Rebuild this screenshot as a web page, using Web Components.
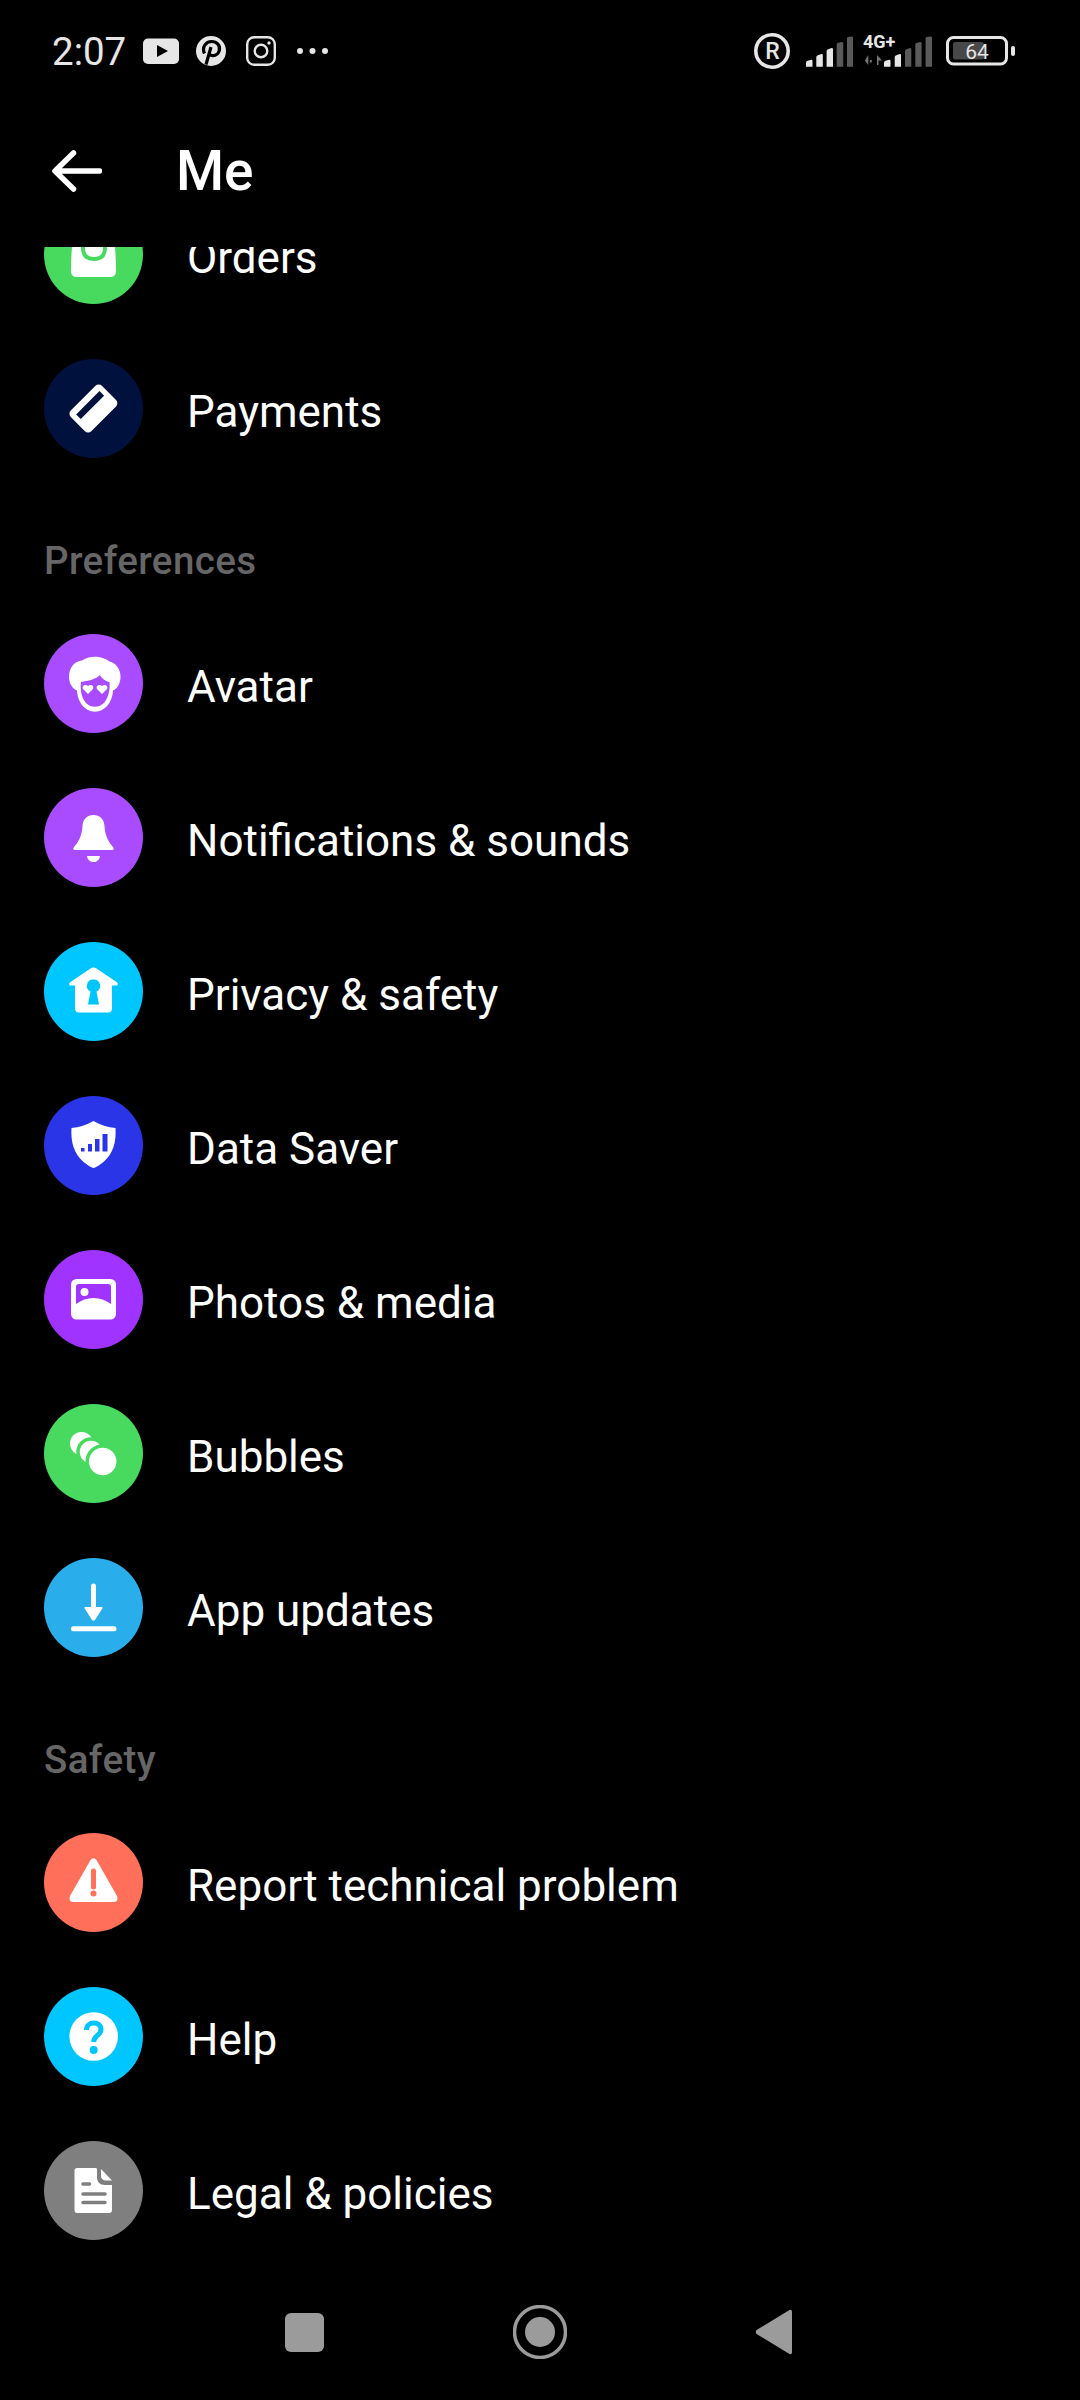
<!DOCTYPE html>
<html><head><meta charset="utf-8"><title>Me</title>
<style>html,body{margin:0;background:#000}</style></head>
<body>
<app-screen>
<status-bar></status-bar>
<app-bar title="Me"></app-bar>
<menu-list>
<menu-row label="Orders" color="#48d95f"><svg slot="icon" viewBox="0 0 99 99"><path d="M30 26H69Q72 45 72 66Q72 72 66 72H33Q27 72 27 66Q27 45 30 26Z" fill="#fff"/><path d="M39 30V43Q39 54 50 54Q61 54 61 43V30" fill="none" stroke="#48d95f" stroke-width="4"/></svg></menu-row>
<menu-row label="Payments" color="#01113d"><svg slot="icon" viewBox="0 0 99 99"><g transform="rotate(-45 49.4 49.5)"><rect x="27.4" y="35" width="44" height="29" rx="4.5" fill="#fff"/><rect x="33" y="41.5" width="33" height="6.5" fill="#01113d"/></g></svg></menu-row>
<section-label>Preferences</section-label>
<menu-row label="Avatar" color="#a94bff"><svg slot="icon" viewBox="0 0 99 99"><path d="M51 22.700C56 22.700 62 24.500 65.500 27.500C72 28.500 77 36 76.500 44C76 50 73 55 69 56.500C68.500 68 61 77.700 51 77.700C41 77.700 33.500 68 33 56.500C29 55 25 50 25 43C25 33 31 27 38 26.500C41 24 46 22.700 51 22.700Z" fill="#fff"/><path d="M37 48C44 47 52 45 56 41C58 45 62 47.500 65.500 48C66.500 60 62 72.700 51 72.700C40 72.700 35.500 60 37 48Z" fill="#a94bff"/><path d="M44 60L39 55C37.500 52 41 49.500 44 52C47 49.500 50.500 52 49 55Z" fill="#fff"/><path d="M58 60L53 55C51.500 52 55 49.500 58 52C61 49.500 64.500 52 63 55Z" fill="#fff"/></svg></menu-row>
<menu-row label="Notifications &amp; sounds" color="#a94bff"><svg slot="icon" viewBox="0 0 99 99"><path d="M49.500 27C56 27 60 31 60.500 38C61 46 63 52 69 59Q71 61.500 68 62H31Q28 61.500 30 59C36 52 38 46 38.500 38C39 31 43 27 49.500 27Z" fill="#fff"/><path d="M43 68H56C55.500 72 52.500 74 49.500 74C46.500 74 43.500 72 43 68Z" fill="#fff"/></svg></menu-row>
<menu-row label="Privacy &amp; safety" color="#00c6ff"><svg slot="icon" viewBox="0 0 99 99"><path d="M46.500 26.500Q49.500 24.500 52.500 26.500L72.500 40Q75 42 73 43.500H68V66Q68 70.500 64 70.500H35Q31 70.500 31 66V43.500H26Q24 42 26.500 40Z" fill="#fff"/><path d="M49.500 37.500A6.300 6.300 0 0 1 52.500 49.500L55 62.500H44L46.500 49.500A6.300 6.300 0 0 1 49.500 37.500Z" fill="#00c6ff"/></svg></menu-row>
<menu-row label="Data Saver" color="#2a35e8"><svg slot="icon" viewBox="0 0 99 99"><path d="M49.500 25Q60 31 71.500 32Q73 54 60 65.500Q52 72 49.500 72Q47 72 39 65.500Q26 54 27.500 32Q39 31 49.500 25Z" fill="#fff"/><rect x="37" y="52" width="3.500" height="3.500" fill="#2a35e8"/><rect x="44" y="48" width="4" height="7.500" fill="#2a35e8"/><rect x="51" y="43" width="4.500" height="12.500" fill="#2a35e8"/><rect x="58.500" y="38" width="5" height="17.500" fill="#2a35e8"/></svg></menu-row>
<menu-row label="Photos &amp; media" color="#a033ff"><svg slot="icon" viewBox="0 0 99 99"><rect x="27" y="29" width="45" height="40.500" rx="5.500" fill="#fff"/><path d="M32 54Q40 48 49.500 48Q59 48 67 54V37Q67 34 64 34H35Q32 34 32 37Z" fill="#a033ff"/><circle cx="40.500" cy="42" r="4" fill="#fff"/></svg></menu-row>
<menu-row label="Bubbles" color="#48d95f"><svg slot="icon" viewBox="0 0 99 99"><circle cx="37.500" cy="39.500" r="11.500" fill="#fff"/><circle cx="47" cy="48" r="13" fill="#fff" stroke="#48d95f" stroke-width="3.500"/><circle cx="58.700" cy="57.500" r="15.500" fill="#fff" stroke="#48d95f" stroke-width="3.500"/></svg></menu-row>
<menu-row label="App updates" color="#2aaeeb"><svg slot="icon" viewBox="0 0 99 99"><path d="M49.500 28V52" stroke="#fff" stroke-width="5" stroke-linecap="round"/><path d="M41.500 49H57.500Q59.500 49 58 51L51 62Q49.500 63.500 48 62L41 51Q39.500 49 41.500 49Z" fill="#fff"/><rect x="27" y="68.300" width="45.500" height="5" rx="2.500" fill="#fff"/></svg></menu-row>
<section-label>Safety</section-label>
<menu-row label="Report technical problem" color="#ff6f59"><svg slot="icon" viewBox="0 0 99 99"><path d="M46.500 27Q49.500 23.500 52.500 27L73 63Q75 68.500 70 69H29Q24 68.500 26 63Z" fill="#fff"/><path d="M49.500 38V54" stroke="#ff6f59" stroke-width="5" stroke-linecap="round"/><circle cx="49.500" cy="60.500" r="3" fill="#ff6f59"/></svg></menu-row>
<menu-row label="Help" color="#00c6ff"><svg slot="icon" viewBox="0 0 99 99"><circle cx="49.700" cy="49.500" r="24.300" fill="#fff"/><path d="M42.500 43C42.500 38.500 46 36 49.700 36C54 36 57 38.500 57 42.500C57 48.500 49.700 48.500 49.700 55" fill="none" stroke="#00c6ff" stroke-width="5"/><circle cx="49.700" cy="63" r="4" fill="#00c6ff"/></svg></menu-row>
<menu-row label="Legal &amp; policies" color="#7f7f7f"><svg slot="icon" viewBox="0 0 99 99"><path d="M33 27H51.500C52.500 27 53 27.500 53 28.500V36C53 41 56 44 61 44H68V69C68 71 67 72 65 72H33C31.500 72 30.500 71 30.500 69V29.500C30.500 28 31.500 27 33 27Z" fill="#fff"/><path d="M57 28L68 39.500H62C59 39.500 57 37.500 57 35Z" fill="#fff"/><path d="M39 43H45.500M39 53H61M39 61.500H61" stroke="#7f7f7f" stroke-width="3.500" stroke-linecap="round"/></svg></menu-row>
</menu-list>
<nav-bar></nav-bar>
</app-screen>
<script>
const font = '"Roboto","Liberation Sans",sans-serif';
function def(name, html) {
  customElements.define(name, class extends HTMLElement {
    connectedCallback() {
      if (this.shadowRoot) return;
      const r = this.attachShadow({mode:'open'});
      r.innerHTML = typeof html === 'function' ? html(this) : html;
    }
  });
}
def('app-screen', `<style>:host{display:flex;flex-direction:column;width:1080px;height:2400px;background:#000;overflow:hidden;font-family:${font};color:#fff}</style><slot></slot>`);
def('status-bar', `<style>
:host{display:flex;align-items:center;justify-content:space-between;height:102px;flex:none;color:#e6e6e6}
.g{display:flex;align-items:center}
.l{padding-left:52px}.r{padding-right:65px}
.t{width:91px;font-size:38.500px;line-height:44px;padding-top:2px;color:#e6e6e6}
svg{display:block;flex:none}
text{font-family:${font}}
</style>
<div class="g l"><span class="t">2:07</span>
<svg width="36" height="26" viewBox="0 0 36 26"><rect y=".5" width="36" height="25.500" rx="5" fill="#e6e6e6"/><path d="M14 7L25 13L14 19Z" fill="#000"/></svg>
<svg style="margin-left:17px" width="30" height="30" viewBox="0 0 30 30"><circle cx="15" cy="15" r="15" fill="#e6e6e6"/><path d="M10 28.500L15 11M8.500 17.500C5.500 11 10 5.500 15.500 5.500C21 5.500 24.500 9.500 23.300 14.500C22 19.500 16.500 21 13.800 18.300" fill="none" stroke="#000" stroke-width="3.200"/></svg>
<svg style="margin-left:20px" width="30" height="30" viewBox="0 0 30 30"><rect x="1.200" y="1.200" width="27.600" height="27.600" rx="7" fill="none" stroke="#e6e6e6" stroke-width="2.400"/><circle cx="15" cy="15" r="6.300" fill="none" stroke="#e6e6e6" stroke-width="2.400"/><circle cx="23" cy="7" r="1.700" fill="#e6e6e6"/></svg>
<svg style="margin-left:21px" width="31" height="8" viewBox="0 0 31 8"><circle cx="3" cy="4" r="3" fill="#e6e6e6"/><circle cx="15.500" cy="4" r="3" fill="#e6e6e6"/><circle cx="28" cy="4" r="3" fill="#e6e6e6"/></svg>
</div>
<div class="g r">
<svg width="36" height="36" viewBox="0 0 36 36"><circle cx="18" cy="18" r="16.200" fill="none" stroke="#e6e6e6" stroke-width="3.600"/><text x="18.500" y="26" font-size="23" font-weight="500" fill="#e6e6e6" text-anchor="middle">R</text></svg>
<svg style="margin-left:16px" width="47" height="36" viewBox="0 0 47 36"><g fill="#e6e6e6"><path d="M0 33.700V29.500Q0 28.500 1 28L5 26.700Q6.500 26.500 6.500 28V33.700Z"/><path d="M10.300 33.700V24Q10.300 23 11.300 22.500L15.300 21Q16.800 21 16.800 22V33.700Z"/><path d="M20.600 33.700V18Q20.600 17 21.600 16.500L25.600 15Q27 15 27 16V33.700Z"/></g><g fill="#5a5a5a"><path d="M30.700 33.700V11Q30.700 10.500 31.700 10L35.700 9Q37.200 9 37.200 10V33.700Z"/><path d="M41 33.700V5Q41 4.500 42 4L45.500 3.500Q47 3.500 47 4.500V33.700Z"/></g></svg>
<svg style="margin-left:10px" width="69" height="36" viewBox="0 0 69 36"><text x="0" y="15" font-size="18" font-weight="700" fill="#e6e6e6">4G+</text>
<path d="M5.300 22V32L2 27.500Z M6.800 27H8.800V29.500H6.800Z" fill="#777"/><path d="M14 32V22L19 27.500H15.500V32Z" fill="#777"/>
<g fill="#e6e6e6"><path d="M21 33.700V29.500Q21 28.500 22 28L26 26.700Q27.500 26.500 27.500 28V33.700Z"/><path d="M31.700 33.700V24Q31.700 23 32.700 22.500L36.700 21Q38 21 38 22V33.700Z"/></g><g fill="#5a5a5a"><path d="M42 33.700V18Q42 17 43 16.500L47 15Q48.300 15 48.300 16V33.700Z"/><path d="M52.300 33.700V11Q52.300 10.500 53.300 10L57.300 9Q58.600 9 58.600 10V33.700Z"/><path d="M62.600 33.700V5Q62.600 4.500 63.600 4L67.500 3.500Q69 3.500 69 4.500V33.700Z"/></g></svg>
<svg style="margin-left:14px" width="69" height="36" viewBox="0 0 69 36"><rect x="1.500" y="4.500" width="59" height="26.500" rx="6" fill="none" stroke="#e6e6e6" stroke-width="3"/><rect x="7" y="9" width="31" height="17.500" rx="2.500" fill="#484848"/><text x="31" y="25.500" font-size="21" fill="#e6e6e6" text-anchor="middle">64</text><rect x="65" y="13" width="4" height="10" rx="2" fill="#e6e6e6"/></svg>
</div>`);
def('app-bar', h => `<style>
:host{display:flex;align-items:center;flex:none;height:138px;padding:0 0 7px 52px}
svg{display:block;flex:none}
h1{margin:0 0 0 74px;font-size:55px;font-weight:500;line-height:64px;color:#fff}
</style>
<svg width="50" height="42" viewBox="0 0 50 42"><path d="M47.500 21H4M21.500 3L3 21L21.500 39" fill="none" stroke="#fff" stroke-width="5.500" stroke-linecap="round" stroke-linejoin="round"/></svg>
<h1>${h.getAttribute('title')}</h1>`);
def('menu-list', `<style>:host{display:block;flex:1;min-height:0;overflow:hidden}.s{margin-top:-69px}</style><div class="s"><slot></slot></div>`);
def('menu-row', h => `<style>
:host{display:flex;align-items:center;height:99px;padding:27px 0 28px 44px}
.c{width:99px;height:99px;border-radius:50%;flex:none;background:${h.getAttribute('color')}}
::slotted(svg){display:block;width:99px;height:99px}
.x{margin-left:44px;padding-top:7px;font-size:44px;line-height:50px;color:#fff}
</style><div class="c"><slot name="icon"></slot></div><span class="x">${h.getAttribute('label').replace('&','&amp;')}</span>`);
def('section-label', `<style>:host{display:flex;align-items:flex-end;box-sizing:border-box;height:121px;padding:0 0 24px 44px;font-size:38.500px;font-weight:500;letter-spacing:.4px;line-height:44px;color:#666}</style><slot></slot>`);
def('nav-bar', `<style>
:host{display:flex;align-items:center;flex:none;height:136px;padding-left:285px}
svg{display:block;flex:none}
</style>
<svg width="39" height="39" viewBox="0 0 39 39"><rect width="39" height="39" rx="6" fill="#9b9b9b"/></svg>
<svg style="margin-left:189px" width="54" height="54" viewBox="0 0 54 54"><circle cx="27" cy="27" r="25.500" fill="none" stroke="#9b9b9b" stroke-width="3.500"/><circle cx="27" cy="27" r="15" fill="#9b9b9b"/></svg>
<svg style="margin-left:188px" width="38" height="46" viewBox="0 0 38 46"><path d="M34.500 1Q37 0 37 3V43Q37 46 34.500 45L1.500 25Q0 23 1.500 21Z" fill="#9b9b9b"/></svg>`);
</script>
</body></html>
